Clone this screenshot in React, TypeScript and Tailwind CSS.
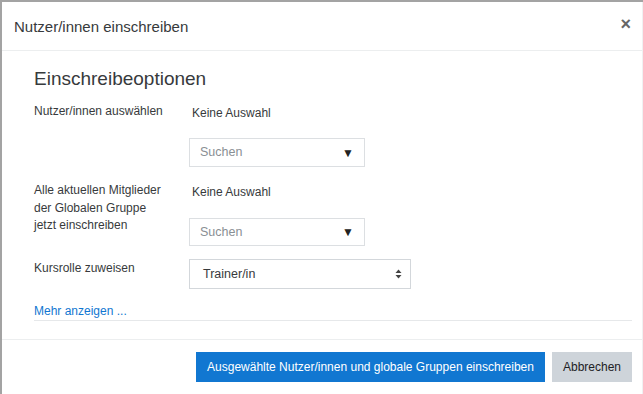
import React from "react";

export default function App() {
  const font = { fontFamily: '"Liberation Sans", Arial, sans-serif' };
  return (
    <div className="w-[643px] h-[394px] overflow-hidden bg-white border-t-2 border-l-2 border-[#a3a3a3] flex" style={font}>
      <div className="flex-1 flex flex-col text-[#373a3c] border-r border-[#f0f1f2]">
        {/* header */}
        <div className="h-[49px] shrink-0 flex items-center justify-between pl-[12px] pr-[11px] border-b border-[#eceeef]">
          <div className="text-[15px] leading-[18px] pt-[2px]">Nutzer/innen einschreiben</div>
          <div className="text-[18px] leading-none font-bold text-[#666] -mt-[4px]">×</div>
        </div>

        {/* body */}
        <div className="flex flex-col pl-[32px] pr-[10px] pt-[16px]">
          <div className="text-[19px] leading-[24px] text-[#373a3c]">Einschreibeoptionen</div>

          {/* row 1 */}
          <div className="flex mt-[11px]">
            <div className="w-[155px] shrink-0 text-[12px] leading-[18px]">Nutzer/innen auswählen</div>
            <div className="flex flex-col">
              <div className="text-[12px] leading-[18px] pl-[3px] mt-[2px]">Keine Auswahl</div>
              <div className="mt-[16px] w-[176px] h-[29px] border border-[#dcdfe2] flex items-center justify-between pl-[10px] pr-[10px]">
                <span className="text-[12.5px] text-[#8a8f94]">Suchen</span>
                <span className="text-[12px] text-[#222]">▼</span>
              </div>
            </div>
          </div>

          {/* row 2 */}
          <div className="flex mt-[15px]">
            <div className="w-[155px] shrink-0 text-[12px] leading-[17.5px]">
              Alle aktuellen Mitglieder
              <br />
              der Globalen Gruppe
              <br />
              jetzt einschreiben
            </div>
            <div className="flex flex-col">
              <div className="text-[12px] leading-[18px] pl-[3px] mt-[1px]">Keine Auswahl</div>
              <div className="mt-[17px] w-[176px] h-[28px] border border-[#dcdfe2] flex items-center justify-between pl-[10px] pr-[10px]">
                <span className="text-[12.5px] text-[#8a8f94]">Suchen</span>
                <span className="text-[12px] text-[#222]">▼</span>
              </div>
            </div>
          </div>

          {/* row 3 */}
          <div className="flex mt-[13px]">
            <div className="w-[155px] shrink-0 text-[12px] leading-[18px]">Kursrolle zuweisen</div>
            <div className="w-[222px] h-[30px] border border-[#d3d7db] flex items-center justify-between pl-[13px] pr-[8px]">
              <span className="text-[12.5px] text-[#373a3c]">Trainer/in</span>
              <svg width="7" height="10" viewBox="0 0 7 10">
                <path d="M3.5 0.5 L6.5 4 L0.5 4 Z" fill="#444" />
                <path d="M3.5 9.5 L6.5 6 L0.5 6 Z" fill="#444" />
              </svg>
            </div>
          </div>

          <div className="mt-[13px] text-[12px] leading-[18px] text-[#1177d1]">Mehr anzeigen ...</div>
          <div className="border-b border-[#e6e8ea]"></div>
        </div>

        <div className="flex-1"></div>

        {/* footer */}
        <div className="h-[55px] shrink-0 border-t border-[#eceeef] flex items-start justify-end pr-[10px] pt-[12px] gap-[7px]">
          <div className="h-[30px] w-[349px] bg-[#1177d1] text-white text-[12px] whitespace-nowrap flex items-center justify-center">
            Ausgewählte Nutzer/innen und globale Gruppen einschreiben
          </div>
          <div className="h-[30px] w-[80px] bg-[#ced4da] text-[#1d2125] text-[12px] whitespace-nowrap flex items-center justify-center">
            Abbrechen
          </div>
        </div>
      </div>
    </div>
  );
}
